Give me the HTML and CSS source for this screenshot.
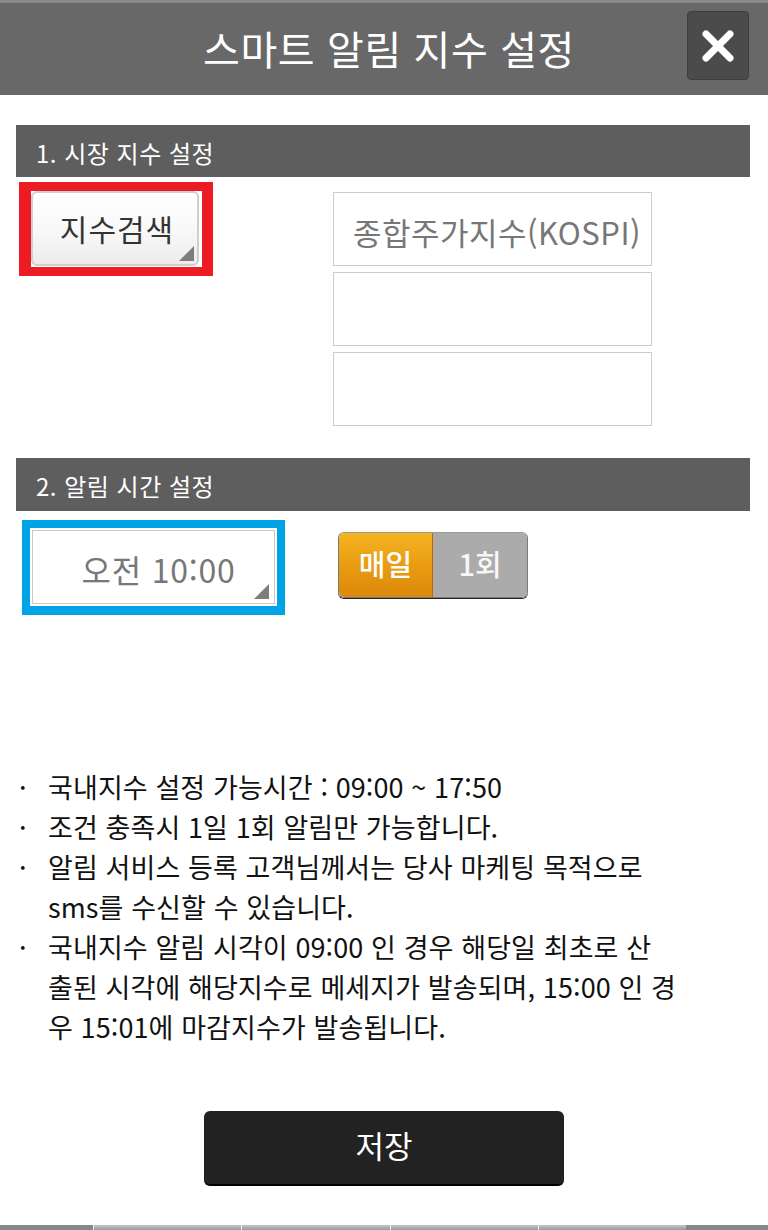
FILE: index.html
```html
<!DOCTYPE html>
<html lang="ko">
<head>
<meta charset="utf-8">
<title>스마트 알림 지수 설정</title>
<link rel="stylesheet" href="styles.css">
</head>
<body>
<div class="page">
  <header class="topbar">
    <h1 class="title">스마트 알림 지수 설정</h1>
    <button class="close" aria-label="닫기">
      <svg width="34" height="34" viewBox="0 0 34 34"><path d="M5 5 L29 29 M29 5 L5 29" stroke="#fff" stroke-width="7" stroke-linecap="round"/></svg>
    </button>
  </header>

  <main class="content">
    <h2 class="sec-head">1. 시장 지수 설정</h2>
    <div class="row1">
      <div class="hl-red">
        <button class="search-btn">지수검색<span class="corner"></span></button>
      </div>
      <div class="index-list">
        <div class="index-box">종합주가지수(KOSPI)</div>
        <div class="index-box"></div>
        <div class="index-box"></div>
      </div>
    </div>

    <h2 class="sec-head sec-head2">2. 알림 시간 설정</h2>
    <div class="row2">
      <div class="hl-blue">
        <div class="time-box">오전 10:00<span class="corner"></span></div>
      </div>
      <div class="toggle">
        <span class="tg tg-on">매일</span>
        <span class="tg tg-off">1회</span>
      </div>
    </div>

    <ul class="notes">
      <li>국내지수 설정 가능시간 : 09:00 ~ 17:50</li>
      <li>조건 충족시 1일 1회 알림만 가능합니다.</li>
      <li>알림 서비스 등록 고객님께서는 당사 마케팅 목적으로<br>sms를 수신할 수 있습니다.</li>
      <li>국내지수 알림 시각이 09:00 인 경우 해당일 최초로 산<br>출된 시각에 해당지수로 메세지가 발송되며, 15:00 인 경<br>우 15:01에 마감지수가 발송됩니다.</li>
    </ul>

    <div class="save-wrap">
      <button class="save">저장</button>
    </div>
  </main>

  <div class="bottom-strip">
    <span class="seg seg-dark"></span>
    <span class="seg"></span>
    <span class="seg"></span>
    <span class="seg"></span>
    <span class="seg"></span>
    <span class="seg seg-dark"></span>
  </div>
</div>
</body>
</html>
```

FILE: styles.css
```css
* { box-sizing: border-box; margin: 0; padding: 0; }
html, body { background: #fff; }
body {
  font-family: "Noto Sans CJK KR", "Noto Sans", sans-serif;
  width: 768px;
  height: 1230px;
  overflow: hidden;
}
.page {
  position: relative;
  height: 1230px;
  display: flex;
  flex-direction: column;
}
.topbar {
  position: relative;
  height: 95px;
  background: #686868;
  border-top: 3px solid #8a8a8a;
  display: flex;
  align-items: center;
  justify-content: center;
}
.title {
  font-weight: 400;
  font-size: 40px;
  color: #fff;
  letter-spacing: 0.6px;
  margin-left: 10px;
  margin-top: -3px;
}
.close {
  position: absolute;
  right: 19px;
  top: 8px;
  width: 62px;
  height: 69px;
  background: #4b4b4b;
  border: 1px solid #3e3e3e;
  border-radius: 4px;
  display: flex;
  align-items: center;
  justify-content: center;
}
.content {
  flex: 1;
  padding: 30px 18px 0 16px;
  display: flex;
  flex-direction: column;
}
.sec-head {
  height: 52px;
  background: #5e5e5e;
  color: #fff;
  font-weight: 400;
  font-size: 24px;
  letter-spacing: 0.5px;
  padding-left: 20px;
  padding-top: 13px;
  line-height: 30px;
}
.sec-head2 { height: 53px; margin-top: 32px; }

.row1 {
  display: flex;
  align-items: flex-start;
  padding-top: 5px;
}
.hl-red {
  margin-left: 3px;
  width: 194px;
  height: 94px;
  border: 9px solid #ed1c24;
  border-left-width: 12px;
  border-right-width: 11px;
  background: #fff;
  padding: 1px 1px 0 1px;
}
.search-btn {
  position: relative;
  width: 168px;
  height: 75px;
  border: 2px solid #cfcfcf;
  border-radius: 6px;
  background: linear-gradient(#ffffff 0%, #f9f9f9 50%, #ececec 100%);
  font-family: inherit;
  font-size: 30px;
  letter-spacing: 1px;
  color: #333;
  display: flex;
  align-items: center;
  justify-content: center;
  padding-bottom: 2px;
  padding-left: 4px;
  margin-left: -1px;
  margin-top: -1px;
}
.corner {
  position: absolute;
  right: 3px;
  bottom: 3px;
  width: 0;
  height: 0;
  border-left: 15px solid transparent;
  border-bottom: 15px solid #7d7d7d;
}
.index-list {
  margin-left: 120px;
  margin-top: 10px;
  display: flex;
  flex-direction: column;
  gap: 6px;
}
.index-box {
  width: 319px;
  height: 74px;
  border: 1px solid #cccccc;
  font-size: 31px;
  letter-spacing: 0.5px;
  color: #777;
  display: flex;
  align-items: center;
  justify-content: flex-end;
  padding-right: 10px;
  padding-top: 4px;
  white-space: nowrap;
}

.row2 {
  display: flex;
  align-items: flex-start;
  padding-top: 9px;
}
.hl-blue {
  margin-left: 6px;
  width: 263px;
  height: 95px;
  border: 8px solid #00a3e6;
  border-bottom-width: 9px;
  background: #fff;
  padding: 2px;
}
.time-box {
  position: relative;
  height: 100%;
  border: 1px solid #c9c9c9;
  font-size: 32px;
  letter-spacing: 0.8px;
  color: #777;
  display: flex;
  align-items: center;
  justify-content: center;
  padding-top: 4px;
  padding-left: 10px;
}
.time-box .corner { right: 5px; bottom: 4px; }
.toggle {
  margin-left: 53px;
  margin-top: 12px;
  display: flex;
  height: 66px;
  border-radius: 6px;
  overflow: hidden;
  border: 1px solid #7a7a7a;
  border-top-color: #9a9a9a;
  box-shadow: 0 1px 0 #222;
}
.tg {
  width: 94px;
  display: flex;
  align-items: center;
  justify-content: center;
  font-size: 29px;
  color: #fff;
  padding-bottom: 4px;
}
.tg-on {
  background: linear-gradient(#f4b421 0%, #e99c12 50%, #dc880b 100%);
  border-right: 1px solid #b9680a;
  font-weight: 500;
}
.tg-off {
  background: #ababab;
  color: #f7f7f7;
  font-weight: 500;
}

.notes {
  list-style: none;
  margin-top: 152px;
  font-size: 27px;
  line-height: 40px;
  color: #111;
  letter-spacing: 0.1px;
}
.notes li {
  position: relative;
  padding-left: 32px;
  white-space: nowrap;
}
.notes li::before {
  content: "·";
  position: absolute;
  left: 3px;
  top: 0;
}
.save-wrap {
  margin-top: 64px;
  display: flex;
  justify-content: flex-start;
}
.save {
  margin-left: 188px;
  width: 360px;
  height: 75px;
  background: #222;
  border: none;
  border-bottom: 2px solid #000;
  border-radius: 6px;
  color: #fff;
  font-family: inherit;
  font-size: 31px;
  display: flex;
  align-items: center;
  justify-content: center;
  padding-bottom: 6px;
}
.bottom-strip {
  position: absolute;
  left: 0;
  right: 0;
  bottom: 0;
  height: 5px;
  display: flex;
}
.seg {
  flex: 1;
  background: linear-gradient(#c4c4c4, #9a9a9a);
  border-left: 1px solid #eee;
}
.seg-dark {
  flex: 0 0 93px;
  background: #888;
  border-left: none;
}
.seg-dark:last-child { flex-basis: 82px; }
```
